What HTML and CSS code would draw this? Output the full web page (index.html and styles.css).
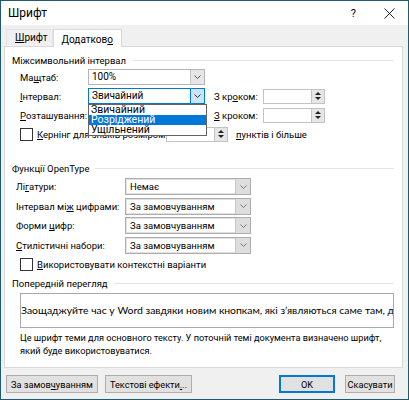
FILE: index.html
```html
<!doctype html>
<html lang="uk">
<head>
  <meta charset="utf-8">
  <title>Шрифт</title>
  <link rel="stylesheet" href="styles.css">
</head>
<body>
  <div class="window">
    <div class="titlebar">
      <span class="title">Шрифт</span>
      <span class="help">?</span>
      <svg class="close" width="11" height="11" viewBox="0 0 11 11"><path d="M0.5 0.5 L10.5 10.5 M10.5 0.5 L0.5 10.5" stroke="#222" stroke-width="1"/></svg>
    </div>
    <div class="tabs">
      <div class="tab"><u>Ш</u>рифт</div>
      <div class="tab active">Додатков<u>о</u></div>
    </div>
    <div class="panel">
      <div class="group-title"><span>Міжсимвольний інтервал</span><i></i></div>

      <div class="row">
        <label class="lbl">Ма<u>щ</u>таб:</label>
        <div class="select w117">
          <span class="val">100%</span>
          <span class="arrow"><svg width="7" height="4" viewBox="0 0 7 4"><path d="M0.5 0.5 L3.5 3.5 L6.5 0.5" fill="none" stroke="#555"/></svg></span>
        </div>
      </div>

      <div class="row">
        <label class="lbl"><u>І</u>нтервал:</label>
        <div class="select w117 focus">
          <span class="val">Звичайний</span>
          <span class="arrow"><svg width="7" height="4" viewBox="0 0 7 4"><path d="M0.5 0.5 L3.5 3.5 L6.5 0.5" fill="none" stroke="#333"/></svg></span>
          <ul class="dropdown">
            <li>Звичайний</li>
            <li class="hl">Розріджений</li>
            <li>Ущільнений</li>
          </ul>
        </div>
        <label class="lbl2">З кр<u>о</u>ком:</label>
        <div class="spin">
          <span class="box"></span>
          <span class="btns"><b class="up"></b><b class="down"></b></span>
        </div>
      </div>

      <div class="row">
        <label class="lbl"><u>Р</u>озташування:</label>
        <div class="select w117">
          <span class="val"></span>
          <span class="arrow"></span>
        </div>
        <label class="lbl2"><u>З</u> кроком:</label>
        <div class="spin">
          <span class="box"></span>
          <span class="btns"><b class="up"></b><b class="down"></b></span>
        </div>
      </div>

      <div class="row">
        <span class="check"></span>
        <label class="kern"><u>К</u>ернінг для знаків розміром:</label>
        <div class="spin">
          <span class="box"></span>
          <span class="btns"><b class="up"></b><b class="down"></b></span>
        </div>
        <label class="after"><u>п</u>унктів і більше</label>
      </div>

      <div class="group-title second"><span>Функції OpenType</span><i></i></div>

      <div class="orow first">
        <label class="olbl">Лі<u>г</u>атури:</label>
        <div class="select otype">
          <span class="val">Немає</span>
          <span class="arrow"><svg width="7" height="4" viewBox="0 0 7 4"><path d="M0.5 0.5 L3.5 3.5 L6.5 0.5" fill="none" stroke="#777"/></svg></span>
        </div>
      </div>
      <div class="orow">
        <label class="olbl">Інтервал мі<u>ж</u> цифрами:</label>
        <div class="select otype">
          <span class="val">За замовчуванням</span>
          <span class="arrow"><svg width="7" height="4" viewBox="0 0 7 4"><path d="M0.5 0.5 L3.5 3.5 L6.5 0.5" fill="none" stroke="#777"/></svg></span>
        </div>
      </div>
      <div class="orow">
        <label class="olbl">Форми <u>ц</u>ифр:</label>
        <div class="select otype">
          <span class="val">За замовчуванням</span>
          <span class="arrow"><svg width="7" height="4" viewBox="0 0 7 4"><path d="M0.5 0.5 L3.5 3.5 L6.5 0.5" fill="none" stroke="#777"/></svg></span>
        </div>
      </div>
      <div class="orow">
        <label class="olbl"><u>С</u>тилістичні набори:</label>
        <div class="select otype">
          <span class="val">За замовчуванням</span>
          <span class="arrow"><svg width="7" height="4" viewBox="0 0 7 4"><path d="M0.5 0.5 L3.5 3.5 L6.5 0.5" fill="none" stroke="#777"/></svg></span>
        </div>
      </div>

      <div class="crow">
        <span class="check"></span>
        <label><u>В</u>икористовувати контекстні варіанти</label>
      </div>

      <div class="group-title third"><span>Попередній перегляд</span><i></i></div>

      <div class="preview">Заощаджуйте час у Word завдяки новим кнопкам, які з’являються саме там, де вони потрібні.</div>
      <p class="desc">Це шрифт теми для основного тексту. У поточній темі документа визначено шрифт, який буде використовуватися.</p>
    </div>
    <div class="buttons">
      <button class="btn b-default">За замов<u>ч</u>уванням</button>
      <button class="btn b-effects">Текстові ефекти<u>.</u>..</button>
      <span class="spacer"></span>
      <button class="btn b-ok">OK</button>
      <button class="btn b-cancel">Скасувати</button>
    </div>
  </div>
</body>
</html>
```

FILE: styles.css
```css
body {
  margin: 0;
  background: #fff;
}
.window {
  width: 409px;
  height: 400px;
  box-sizing: border-box;
  border: 1px solid #1f5a6e;
  background: #f0f0f0;
  display: flex;
  flex-direction: column;
  font-family: Roboto, sans-serif;
  font-size: 9.5px;
  color: #000;
  white-space: nowrap;
}
u {
  text-decoration: underline;
  text-underline-offset: 1px;
}
.titlebar {
  height: 24px;
  background: #fff;
  display: flex;
  align-items: center;
  padding-left: 7px;
}
.title {
  flex: 1;
  font-size: 12px;
}
.help {
  font-size: 11px;
  margin-right: 28px;
}
.close {
  margin-right: 13px;
}
.tabs {
  height: 21px;
  display: flex;
  align-items: flex-end;
  padding-left: 5px;
  position: relative;
  z-index: 1;
}
.tab {
  height: 15px;
  line-height: 15px;
  padding: 0 5px 0 8px;
  border: 1px solid #e3e3e3;
  border-bottom: none;
  margin-bottom: 1px;
  font-size: 10px;
}
.tab.active {
  height: 17px;
  line-height: 19px;
  background: #fff;
  border-color: #d9d9d9;
  margin-bottom: -1px;
  padding: 0 8px 0 7px;
}
.panel {
  height: 322px;
  box-sizing: border-box;
  margin: 0 5px 0 3px;
  border: 1px solid #d9d9d9;
  background: #fff;
  padding: 0 6px 0 7px;
}
.group-title {
  height: 12px;
  margin-top: 7px;
  display: flex;
  align-items: center;
}
.group-title i {
  flex: 1;
  height: 1px;
  margin-left: 6px;
  margin-right: 2px;
  background: #e5e5e5;
}
.group-title.second {
  margin-top: 20px;
}
.group-title.third {
  margin-top: 7px;
}
.row {
  height: 16px;
  margin-top: 3px;
  margin-left: 8px;
  display: flex;
  align-items: center;
}
.lbl {
  width: 68px;
}
.lbl2 {
  width: 49px;
  margin-left: 9px;
}
.select {
  height: 16px;
  box-sizing: border-box;
  border: 1px solid #b5b5b5;
  background: #fff;
  display: flex;
  position: relative;
}
.w117 {
  width: 117px;
}
.select .val {
  flex: 1;
  padding-left: 3px;
  line-height: 14px;
  font-size: 10px;
}
.select .arrow {
  width: 13px;
  background: #e6e6e6;
  border-left: 1px solid #c6c6c6;
  display: flex;
  align-items: center;
  justify-content: center;
}
.select.focus {
  border-color: #0078d7;
}
.select.focus .arrow {
  background: #cce4f7;
  border-left-color: #0078d7;
}
.dropdown {
  position: absolute;
  top: 15px;
  left: -1px;
  width: 117px;
  margin: 0;
  padding: 0;
  list-style: none;
  background: #fff;
  border: 1px solid #646464;
  z-index: 2;
}
.dropdown li {
  height: 10px;
  line-height: 10px;
  padding-left: 2px;
  font-size: 10.5px;
}
.dropdown li.hl {
  background: #0078d7;
  color: #fff;
}
.spin {
  display: flex;
  height: 15px;
}
.spin .box {
  width: 47px;
  border: 1px solid #c3c3c3;
  border-right: none;
  background: #fff;
}
.spin .btns {
  width: 12px;
  border: 1px solid #c3c3c3;
  background: #e6e6e6;
  display: flex;
  flex-direction: column;
  align-items: center;
  justify-content: center;
  gap: 2px;
}
.spin .up {
  width: 0;
  height: 0;
  border-left: 3px solid transparent;
  border-right: 3px solid transparent;
  border-bottom: 3px solid #222;
}
.spin .down {
  width: 0;
  height: 0;
  border-left: 3px solid transparent;
  border-right: 3px solid transparent;
  border-top: 3px solid #222;
}
.check {
  width: 11px;
  height: 11px;
  border: 1px solid #333;
  background: #fff;
  margin-right: 4px;
  flex: none;
}
.kern {
  width: 129px;
  overflow: hidden;
}
.after {
  margin-left: 8px;
}
.orow {
  height: 17px;
  margin-top: 2.5px;
  margin-left: 4px;
  display: flex;
  align-items: center;
}
.orow.first {
  margin-top: 4px;
}
.olbl {
  width: 109px;
}
.select.otype {
  width: 126px;
  height: 17px;
  border: 1px solid #adadad;
  box-shadow: inset 0 0 0 1px #e0e0e0;
}
.select.otype .val {
  line-height: 15px;
  font-size: 9.5px;
  padding-left: 4px;
}
.select.otype .arrow {
  width: 14px;
  background: #dedede;
  border-left: 1px solid #c8c8c8;
}
.crow {
  height: 13px;
  margin-top: 4px;
  margin-left: 8px;
  display: flex;
  align-items: center;
}
.preview {
  margin: 3px 2px 0 8px;
  height: 35px;
  box-sizing: border-box;
  border: 1px solid #a8a8a8;
  line-height: 33px;
  font-family: Lato, sans-serif;
  font-size: 10.4px;
  overflow: hidden;
}
.desc {
  margin: 3px 0 0 8px;
  line-height: 13px;
  width: 372px;
  font-size: 9.2px;
  white-space: normal;
}
.buttons {
  display: flex;
  margin-top: 7px;
  padding: 0 13px 0 5px;
  gap: 7px;
}
.spacer {
  flex: 1;
}
.btn {
  height: 18px;
  box-sizing: border-box;
  border: 1px solid #adadad;
  background: #e1e1e1;
  font-family: Roboto, sans-serif;
  font-size: 9.2px;
  padding: 0;
  color: #000;
  white-space: nowrap;
}
.b-default {
  width: 92px;
}
.b-effects {
  width: 87px;
}
.b-ok {
  width: 56px;
  border-color: #0078d7;
  box-shadow: inset 0 0 0 1px #0078d7;
  margin-right: 3px;
}
.b-cancel {
  width: 50px;
}
```
